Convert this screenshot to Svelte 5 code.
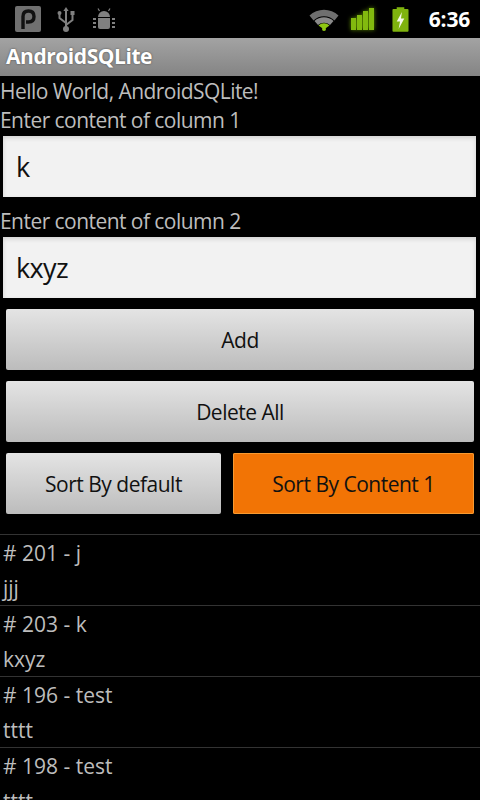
<script>
    const records = [
        { title: '# 201 - j', body: 'jjj' },
        { title: '# 203 - k', body: 'kxyz' },
        { title: '# 196 - test', body: 'tttt' },
        { title: '# 198 - test', body: 'tttt' }
    ]
</script>

<div class="screen">
    <div class="statusbar">
        <div class="notif">
            <svg class="icon" width="28" height="28" viewBox="0 0 28 28">
                <rect x="1" y="1" width="26" height="26" rx="2" fill="#707070"/>
                <path d="M9 24V11.5C9 8 11 6 14.5 6S20 8 20 11.5 18 17 14.5 17H12" fill="none" stroke="#111" stroke-width="3.4"/>
            </svg>
            <svg class="icon usb" width="18" height="28" viewBox="0 0 18 28">
                <path d="M9 2l2.6 4H6.4z" fill="#808080"/>
                <path d="M9 5v17M9 18L2.5 13V9M9 20l6.500-5v-5" fill="none" stroke="#808080" stroke-width="2"/>
                <circle cx="2.500" cy="8" r="2" fill="#808080"/>
                <rect x="13.500" y="6" width="4" height="4" fill="#808080"/>
                <circle cx="9" cy="24" r="3" fill="#808080"/>
            </svg>
            <svg class="icon droid" width="22" height="26" viewBox="0 0 22 26">
                <path d="M5 11a6 6 0 0 1 12 0z" fill="#808080"/>
                <path d="M6.500 5L5 2.500M15.500 5L17 2.500" stroke="#808080" stroke-width="1.200"/>
                <path d="M5 12h12v9a2 2 0 0 1-2 2H7a2 2 0 0 1-2-2z" fill="#808080"/>
                <path d="M1.500 12v2M1.500 16v2M1.500 20v2M20.500 12v2M20.500 16v2M20.500 20v2" stroke="#808080" stroke-width="3"/>
            </svg>
        </div>
        <div class="system">
            <svg class="icon" width="30" height="24" viewBox="0 0 30 24">
                <path d="M0.500 8.500a21 21 0 0 1 29 0l-4 5a15 15 0 0 0-21 0z" fill="#6f6f6f"/>
                <path d="M5.500 14a14 14 0 0 1 19 0l-3.500 4a9 9 0 0 0-12 0z" fill="#8a8a8a"/>
                <path d="M9.500 18.500a8 8 0 0 1 11 0L17 21h-4z" fill="#8fc814"/>
                <circle cx="15" cy="22" r="2" fill="#8fc814"/>
            </svg>
            <svg class="icon signal" width="24" height="24" viewBox="0 0 24 24">
                <rect x="0" y="11" width="5" height="12" fill="#82b90f"/>
                <rect x="6" y="8" width="5" height="15" fill="#82b90f"/>
                <rect x="12" y="4" width="5" height="19" fill="#82b90f"/>
                <rect x="18" y="1" width="5" height="22" fill="#82b90f"/>
            </svg>
            <svg class="icon battery" width="17" height="25" viewBox="0 0 18 26">
                <rect x="5" y="0" width="8" height="3" fill="#7fb30e"/>
                <rect x="0.500" y="2" width="17" height="24" rx="1" fill="#7fb30e"/>
                <path d="M10.500 5L5 15h3.500L7 23l6-11H9.500z" fill="#f4f8e8"/>
            </svg>
            <span class="clock">6:36</span>
        </div>
    </div>
    <div class="titlebar">AndroidSQLite</div>

    <div class="content">
        <div class="label">Hello World, AndroidSQLite!</div>
        <div class="label">Enter content of column 1</div>
        <div class="field">k</div>
        <div class="label second">Enter content of column 2</div>
        <div class="field">kxyz</div>

        <div class="buttons">
            <button>Add</button>
            <button>Delete All</button>
            <div class="sort-row">
                <button>Sort By default</button>
                <button class="active">Sort By Content 1</button>
            </div>
        </div>

        <div class="list">
            {#each records as r}
                <div class="row">
                    <div class="row-title">{r.title}</div>
                    <div class="row-body">{r.body}</div>
                </div>
            {/each}
        </div>
    </div>
</div>

<style>
    :global(body) {
        margin: 0;
        background: #000;
    }
    .screen {
        width: 480px;
        height: 800px;
        overflow: hidden;
        background: #000;
        font-family: "Open Sans", "Noto Sans", sans-serif;
    }
    .statusbar {
        height: 38px;
        display: flex;
        justify-content: space-between;
        align-items: center;
        background: #000;
    }
    .notif {
        display: flex;
        align-items: center;
        padding-left: 14px;
    }
    .usb {
        margin-left: 15px;
    }
    .droid {
        margin-left: 18px;
    }
    .system {
        display: flex;
        align-items: center;
        padding-right: 10px;
    }
    .icon {
        display: block;
    }
    .signal {
        margin-left: 12px;
        filter: drop-shadow(0 0 2px #5c8a00);
    }
    .battery {
        margin-left: 17px;
    }
    .clock {
        margin-left: 20px;
        color: #fff;
        font-size: 21px;
        font-weight: 700;
        letter-spacing: -0.2px;
    }
    .titlebar {
        height: 38px;
        line-height: 37px;
        padding-left: 6px;
        background: linear-gradient(#a3a3a3, #848484);
        color: #fff;
        font-size: 21px;
        font-weight: 700;
        letter-spacing: -0.45px;
        text-shadow: 0 0 2px #444;
    }
    .content {
        display: flex;
        flex-direction: column;
    }
    .label {
        height: 29px;
        line-height: 31px;
        color: #bdbdbd;
        font-size: 21px;
        letter-spacing: -0.55px;
    }
    .label.second {
        margin-top: 9px;
    }
    .field {
        height: 61px;
        line-height: 61px;
        margin: 2px 4px 0 3px;
        padding-left: 13px;
        background: #f2f2f2;
        box-shadow: inset 0 2px 4px #d0d0d0;
        color: #111;
        font-size: 27px;
        letter-spacing: -0.6px;
    }
    .buttons {
        display: flex;
        flex-direction: column;
        gap: 11px;
        margin: 11px 6px 0;
    }
    button {
        height: 61px;
        padding: 0;
        border: 0;
        border-radius: 2px;
        background: linear-gradient(#e4e4e4, #bcbcbc);
        color: #111;
        font-family: inherit;
        font-size: 21px;
        letter-spacing: -0.5px;
    }
    .sort-row {
        display: flex;
        gap: 12px;
    }
    .sort-row button {
        width: 215px;
    }
    .sort-row .active {
        width: 241px;
        background: #f27405;
        box-shadow: inset 0 0 0 1px #f89a30;
    }
    .list {
        margin-top: 20px;
    }
    .row {
        height: 70px;
        border-top: 1px solid #333;
        padding-left: 3px;
        color: #bdbdbd;
        font-size: 21px;
    }
    .row-title {
        height: 35px;
        line-height: 36px;
    }
    .row-body {
        height: 35px;
        line-height: 37px;
    }
</style>
